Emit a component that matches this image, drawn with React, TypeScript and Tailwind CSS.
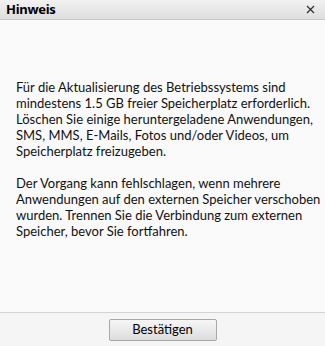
import React from "react";

const p1 = [
  "Für die Aktualisierung des Betriebssystems sind",
  "mindestens 1.5 GB freier Speicherplatz erforderlich.",
  "Löschen Sie einige heruntergeladene Anwendungen,",
  "SMS, MMS, E-Mails, Fotos und/oder Videos, um",
  "Speicherplatz freizugeben.",
];
const p2 = [
  "Der Vorgang kann fehlschlagen, wenn mehrere",
  "Anwendungen auf den externen Speicher verschoben",
  "wurden. Trennen Sie die Verbindung zum externen",
  "Speicher, bevor Sie fortfahren.",
];

export default function App() {
  return (
    <div className="w-[325px] h-[346px] flex flex-col bg-[#fafafa] text-black" style={{ fontFamily: 'Lato, "Noto Sans", sans-serif' }}>
      <div className="h-[20px] flex items-center justify-between pl-[6px] pr-[10px] bg-gradient-to-b from-[#f2f2f2] to-[#dedede] border-b border-[#c8c8c8]">
        <span className="text-[13px] font-bold tracking-[-0.3px]" style={{ fontFamily: '"Noto Sans", sans-serif' }}>Hinweis</span>
        <svg width="9" height="9" viewBox="0 0 9 9">
          <path d="M1 1 L8 8 M8 1 L1 8" stroke="#333" strokeWidth="1.3" />
        </svg>
      </div>
      <div className="flex-1 px-[16px] pt-[59px] text-[13px] leading-[16px] text-[#111]">
        <p>
          {p1.map((l) => (
            <span key={l} className="block whitespace-nowrap">{l}</span>
          ))}
        </p>
        <p className="mt-[16px]">
          {p2.map((l) => (
            <span key={l} className="block whitespace-nowrap">{l}</span>
          ))}
        </p>
      </div>
      <div className="h-[34px] border-t border-[#d4d4d4] bg-[#f5f5f5] flex items-center justify-center">
        <button className="w-[108px] h-[22px] border border-[#a8a8a8] rounded-[2px] bg-gradient-to-b from-[#f6f6f6] to-[#dddddd] text-[13px] text-black flex items-center justify-center">Bestätigen</button>
      </div>
    </div>
  );
}
